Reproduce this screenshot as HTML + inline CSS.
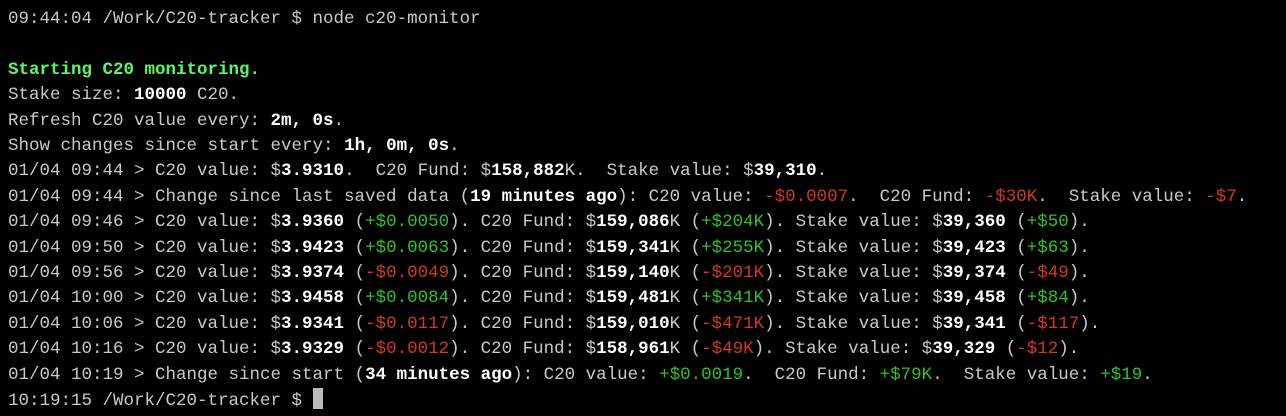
<!DOCTYPE html>
<html><head><meta charset="utf-8"><style>
html,body{margin:0;padding:0;background:#000;width:1286px;height:416px;overflow:hidden}
pre{margin:0;padding:7px 0 0 8px;font-family:"Liberation Mono",monospace;font-size:17.5px;line-height:25.4px;color:#c9c9c9;white-space:pre}
b{color:#fff;font-weight:bold}
.g{color:#2ec22a}.r{color:#d2391f}.G{color:#5cf766;font-weight:bold}
.cur{display:inline-block;width:10px;height:21px;background:#bbb;vertical-align:-4px}
</style></head><body><pre>09:44:04 /Work/C20-tracker $ node c20-monitor

<span class="G">Starting C20 monitoring.</span>
Stake size: <b>10000</b> C20.
Refresh C20 value every: <b>2m, 0s</b>.
Show changes since start every: <b>1h, 0m, 0s</b>.
01/04 09:44 &gt; C20 value: $<b>3.9310</b>.  C20 Fund: $<b>158,882</b>K.  Stake value: $<b>39,310</b>.
01/04 09:44 &gt; Change since last saved data (<b>19 minutes ago</b>): C20 value: <span class="r">-$0.0007</span>.  C20 Fund: <span class="r">-$30K</span>.  Stake value: <span class="r">-$7</span>.
01/04 09:46 &gt; C20 value: $<b>3.9360</b> (<span class="g">+$0.0050</span>). C20 Fund: $<b>159,086</b>K (<span class="g">+$204K</span>). Stake value: $<b>39,360</b> (<span class="g">+$50</span>).
01/04 09:50 &gt; C20 value: $<b>3.9423</b> (<span class="g">+$0.0063</span>). C20 Fund: $<b>159,341</b>K (<span class="g">+$255K</span>). Stake value: $<b>39,423</b> (<span class="g">+$63</span>).
01/04 09:56 &gt; C20 value: $<b>3.9374</b> (<span class="r">-$0.0049</span>). C20 Fund: $<b>159,140</b>K (<span class="r">-$201K</span>). Stake value: $<b>39,374</b> (<span class="r">-$49</span>).
01/04 10:00 &gt; C20 value: $<b>3.9458</b> (<span class="g">+$0.0084</span>). C20 Fund: $<b>159,481</b>K (<span class="g">+$341K</span>). Stake value: $<b>39,458</b> (<span class="g">+$84</span>).
01/04 10:06 &gt; C20 value: $<b>3.9341</b> (<span class="r">-$0.0117</span>). C20 Fund: $<b>159,010</b>K (<span class="r">-$471K</span>). Stake value: $<b>39,341</b> (<span class="r">-$117</span>).
01/04 10:16 &gt; C20 value: $<b>3.9329</b> (<span class="r">-$0.0012</span>). C20 Fund: $<b>158,961</b>K (<span class="r">-$49K</span>). Stake value: $<b>39,329</b> (<span class="r">-$12</span>).
01/04 10:19 &gt; Change since start (<b>34 minutes ago</b>): C20 value: <span class="g">+$0.0019</span>.  C20 Fund: <span class="g">+$79K</span>.  Stake value: <span class="g">+$19</span>.
10:19:15 /Work/C20-tracker $ <span class="cur"></span></pre></body></html>
